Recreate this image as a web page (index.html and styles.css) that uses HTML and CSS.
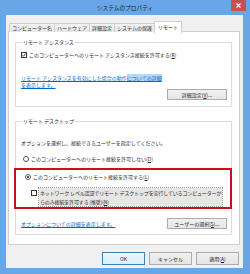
FILE: index.html
```html
<!DOCTYPE html>
<html lang="ja">
<head>
    <meta charset="UTF-8">
    <title>システムのプロパティ</title>
    <link rel="stylesheet" href="styles.css">
</head>
<body>
    <div class="window">
        <div class="titlebar">
            <span></span>
            <span class="title">システムのプロパティ</span>
            <span class="close">
                <svg width="5" height="5" viewBox="0 0 5 5"><path d="M0.5 0.5L4.5 4.5M4.5 0.5L0.5 4.5" stroke="#fff" stroke-width="1.1"/></svg>
            </span>
        </div>
        <div class="client">
            <div class="tabs">
                <div class="tab">コンピューター名</div>
                <div class="tab">ハードウェア</div>
                <div class="tab">詳細設定</div>
                <div class="tab">システムの保護</div>
                <div class="tab active">リモート</div>
            </div>
            <div class="panel">
                <fieldset class="group">
                    <legend>リモート アシスタンス</legend>
                    <div class="option">
                        <span class="box"><svg width="4" height="4" viewBox="0 0 4 4"><path d="M0.3 2L1.5 3.2L3.7 0.6" fill="none" stroke="#222" stroke-width="0.9"/></svg></span>
                        <span>このコンピューターへのリモート アシスタンス接続を許可する(<u>R</u>)</span>
                    </div>
                    <a class="link help-a">リモート アシスタンスを有効にした場合の動作<span class="hl">についての詳細</span><br>を表示します。</a>
                    <div class="row end">
                        <button class="btn wide">詳細設定(<u>V</u>)...</button>
                    </div>
                </fieldset>

                <fieldset class="group second">
                    <legend>リモート デスクトップ</legend>
                    <p class="hint">オプションを選択し、接続できるユーザーを指定してください。</p>
                    <div class="option radio-row first">
                        <span class="radio"></span>
                        <span>このコンピューターへのリモート接続を許可しない(<u>D</u>)</span>
                    </div>
                    <div class="highlight">
                        <div class="option radio-row">
                            <span class="radio on"></span>
                            <span>このコンピューターへのリモート接続を許可する(<u>L</u>)</span>
                        </div>
                        <div class="option nla">
                            <span class="box"></span>
                            <span class="focus">ネットワーク レベル認証でリモート デスクトップを実行しているコンピューターか<br>らのみ接続を許可する (推奨)(<u>N</u>)</span>
                        </div>
                    </div>
                    <div class="row between">
                        <a class="link">オプションについての詳細を表示します。</a>
                        <button class="btn wide">ユーザーの選択(<u>S</u>)...</button>
                    </div>
                </fieldset>
            </div>
            <div class="footer">
                <button class="btn default">OK</button>
                <button class="btn">キャンセル</button>
                <button class="btn">適用(<u>A</u>)</button>
            </div>
        </div>
    </div>
</body>
</html>
```

FILE: styles.css
```css
html, body {
    margin: 0;
    padding: 0;
}
body {
    width: 250px;
    height: 274px;
    overflow: hidden;
    font-family: "Noto Sans CJK JP", "Noto Sans", sans-serif;
    font-size: 5px;
    line-height: 8px;
    color: #1e1e1e;
}
.window {
    width: 250px;
    height: 274px;
    background-color: #68a6e8; /* Windows 8 frame */
    display: flex;
    flex-direction: column;
}
.titlebar {
    height: 15px;
    display: grid;
    grid-template-columns: 1fr auto 1fr;
    align-items: start;
}
.title {
    font-size: 5.7px;
    line-height: 15px;
    color: #1a1a1a;
}
.close {
    justify-self: end;
    width: 15px;
    height: 11px;
    margin-right: 4px;
    background-color: #c75050;
    display: flex;
    justify-content: center;
    align-items: center;
}
.close svg {
    display: block;
}
.client {
    flex: 1;
    margin: 0 7px 6px 6px;
    background-color: #f0f0f0;
    display: flex;
    flex-direction: column;
    padding: 6px 3px 0 2px;
}
.tabs {
    display: flex;
    height: 10px;
    padding-left: 1px;
    position: relative;
    z-index: 1;
}
.tab {
    margin-top: 2px;
    height: 8px;
    line-height: 8px;
    padding: 0 2px;
    border: 1px solid #cfcfcf;
    border-bottom: none;
    margin-right: -1px;
    background: linear-gradient(#f2f2f2, #e8e8e8);
    font-size: 5px;
    white-space: nowrap;
}
.tab.active {
    margin-top: 0;
    height: 11px;
    line-height: 10px;
    background: #fff;
    padding: 0 3px;
}
.panel {
    flex: 1;
    background-color: #fff;
    border: 1px solid #cfcfcf;
    padding: 6px 7px 0 6px;
    display: flex;
    flex-direction: column;
}
.group {
    margin: 0;
    border: 1px solid #dcdcdc;
    padding: 5px 4px 6px 5px;
    min-width: 0;
}
.group legend {
    padding: 0 1px;
    margin-left: 1px;
    line-height: 8px;
}
.group.second {
    margin-top: 10px;
    padding-top: 8px;
    padding-bottom: 5px;
}
.option {
    display: flex;
    align-items: center;
    gap: 2px;
    white-space: nowrap;
}
.box {
    width: 4px;
    height: 4px;
    border: 1px solid #333;
    background: #fff;
    display: flex;
    align-items: center;
    justify-content: center;
    flex: none;
}
.box svg {
    display: block;
}
.radio {
    width: 4px;
    height: 4px;
    border: 1px solid #555;
    border-radius: 50%;
    background: #fff;
    flex: none;
    display: flex;
    align-items: center;
    justify-content: center;
}
.radio.on::after {
    content: "";
    width: 2px;
    height: 2px;
    border-radius: 50%;
    background: #222;
}
.radio-row {
    padding-left: 2px;
}
.radio-row.first {
    margin-top: 8px;
}
.link {
    display: block;
    color: #0066cc;
    text-decoration: underline;
    line-height: 7px;
}
.help-a {
    margin-top: 15px;
}
.hl {
    background-color: #b7d8f6;
}
.row {
    display: flex;
    align-items: center;
}
.row.end {
    justify-content: flex-end;
    margin-top: 1px;
}
.row.between {
    justify-content: space-between;
    margin-top: 9px;
}
.btn {
    font-family: inherit;
    font-size: 5px;
    line-height: 9px;
    height: 11px;
    padding: 0;
    border: 1px solid #acacac;
    background: linear-gradient(#f0f0f0, #e5e5e5);
    color: #1e1e1e;
    width: 43px;
}
.btn.wide {
    width: 60px;
}
.btn.default {
    border-color: #3c7fb1;
    background: linear-gradient(#eaf6fd, #d9f0fc);
}
.hint {
    margin: 6px 0 0 0;
}
.highlight {
    margin: 5px -5px 0 -7px;
    border: 2px solid #c8101c;
    padding: 3px 0 1px 7px;
}
.nla {
    margin-top: 7px;
    padding-left: 8px;
    align-items: flex-start;
}
.nla .box {
    margin-top: 2px;
}
.focus {
    background-color: #e6e6e6;
    outline: 1px dotted #999;
    line-height: 9px;
    padding: 0 1px;
    letter-spacing: -0.15px;
}
.footer {
    display: flex;
    justify-content: flex-end;
    gap: 4px;
    padding: 7px 1px 3px 0;
}
.footer .btn {
    height: 13px;
    width: 43px;
}
```
